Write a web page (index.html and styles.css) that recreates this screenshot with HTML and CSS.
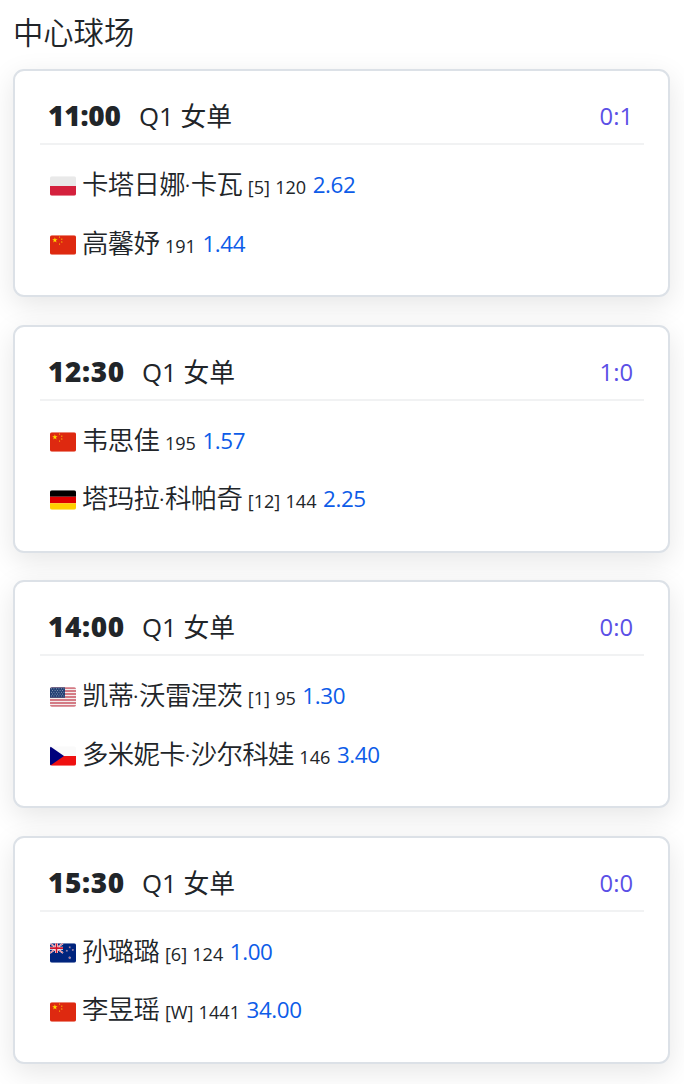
FILE: index.html
```
<!DOCTYPE html>
<html lang="zh-CN">
<head>
<meta charset="utf-8">
<title>中心球场</title>
<link rel="stylesheet" href="styles.css">
</head>
<body>
<svg class="defs" aria-hidden="true">
  <defs>
    <clipPath id="round"><rect width="26" height="19.5" rx="1.8"/></clipPath>
    <path id="star" d="M0-1 .225-.309.951-.309.363.118.588.809 0 .382-.588.809-.363.118-.951-.309-.225-.309z"/>
    <symbol id="pl" viewBox="0 0 26 19.5"><g clip-path="url(#round)"><path fill="#e9e9e9" d="M0 0h26v10H0z"/><path fill="#d4213d" d="M0 9.75h26V19.5H0z"/></g></symbol>
    <symbol id="cn" viewBox="0 0 26 19.5"><g clip-path="url(#round)"><path fill="#de2910" d="M0 0h26v19.5H0z"/><g fill="#ffde00"><use href="#star" transform="translate(4.9 4.9) scale(2.8)"/><use href="#star" transform="translate(9.6 1.9) scale(.95) rotate(20)"/><use href="#star" transform="translate(11.8 3.9) scale(.95) rotate(40)"/><use href="#star" transform="translate(11.8 6.8) scale(.95)"/><use href="#star" transform="translate(9.6 8.9) scale(.95) rotate(20)"/></g></g></symbol>
    <symbol id="de" viewBox="0 0 26 19.5"><g clip-path="url(#round)"><path d="M0 0h26v6.5H0z"/><path fill="#d00" d="M0 6.5h26V13H0z"/><path fill="#ffce00" d="M0 13h26v6.5H0z"/></g></symbol>
    <symbol id="us" viewBox="0 0 26 19.5"><g clip-path="url(#round)"><path fill="#f4eded" d="M0 0h26v19.5H0z"/><path stroke="#c95563" stroke-width="1.5" d="M0 .75h26M0 3.75h26M0 6.75h26M0 9.75h26M0 12.75h26M0 15.75h26M0 18.75h26"/><path fill="#233f73" d="M0 0h15v10.5H0z"/><path stroke="#b9c2d4" stroke-width=".8" stroke-dasharray=".8 1.7" d="M1 1.5h13.5M2.2 3.3h12M1 5.1h13.5M2.2 6.9h12M1 8.7h13.5"/></g></symbol>
    <symbol id="cz" viewBox="0 0 26 19.5"><g clip-path="url(#round)"><path fill="#fafafa" d="M0 0h26v10H0z"/><path fill="#ef1010" d="M0 9.75h26V19.5H0z"/><path fill="#00007c" d="M0 0l14 9.75L0 19.5z"/></g></symbol>
    <symbol id="nz" viewBox="0 0 26 19.5"><g clip-path="url(#round)"><path fill="#00247d" d="M0 0h26v19.5H0z"/><path stroke="#fff" stroke-width="1.7" d="M0 0l13 9.75M13 0L0 9.75"/><path stroke="#cf142b" stroke-width=".7" d="M0 0l13 9.75M13 0L0 9.75"/><path stroke="#fff" stroke-width="3" d="M6.5 0v9.75M0 4.88h13"/><path stroke="#cf142b" stroke-width="1.7" d="M6.5 0v9.75M0 4.88h13"/><g fill="#cc142b" stroke="#fff" stroke-width=".3"><use href="#star" transform="translate(19.7 4.1) scale(.9)"/><use href="#star" transform="translate(16.8 7.5) scale(.9)"/><use href="#star" transform="translate(22.8 6.7) scale(.9)"/><use href="#star" transform="translate(19.7 14.5) scale(1.2)"/></g></g></symbol>
  </defs>
</svg>
<main class="court">
  <h1 class="court-name">中心球场</h1>
  <section class="card">
    <header class="head"><b class="time time-tight">11:00</b><span class="round">Q1 女单</span><span class="score">0:1</span></header>
    <div class="player"><svg class="flag"><use href="#pl"/></svg><span class="name">卡塔日娜<i class="dot">·</i>卡瓦</span><span class="rank">[5] 120</span><span class="odds">2.62</span></div>
    <div class="player"><svg class="flag"><use href="#cn"/></svg><span class="name">高馨妤</span><span class="rank">191</span><span class="odds">1.44</span></div>
  </section>
  <section class="card">
    <header class="head"><b class="time">12:30</b><span class="round">Q1 女单</span><span class="score">1:0</span></header>
    <div class="player"><svg class="flag"><use href="#cn"/></svg><span class="name">韦思佳</span><span class="rank">195</span><span class="odds">1.57</span></div>
    <div class="player"><svg class="flag"><use href="#de"/></svg><span class="name">塔玛拉<i class="dot">·</i>科帕奇</span><span class="rank">[12] 144</span><span class="odds">2.25</span></div>
  </section>
  <section class="card">
    <header class="head"><b class="time">14:00</b><span class="round">Q1 女单</span><span class="score">0:0</span></header>
    <div class="player"><svg class="flag"><use href="#us"/></svg><span class="name">凯蒂<i class="dot">·</i>沃雷涅茨</span><span class="rank">[1] 95</span><span class="odds">1.30</span></div>
    <div class="player"><svg class="flag"><use href="#cz"/></svg><span class="name">多米妮卡<i class="dot">·</i>沙尔科娃</span><span class="rank">146</span><span class="odds">3.40</span></div>
  </section>
  <section class="card">
    <header class="head"><b class="time">15:30</b><span class="round">Q1 女单</span><span class="score">0:0</span></header>
    <div class="player"><svg class="flag"><use href="#nz"/></svg><span class="name">孙璐璐</span><span class="rank">[6] 124</span><span class="odds">1.00</span></div>
    <div class="player"><svg class="flag"><use href="#cn"/></svg><span class="name">李昱瑶</span><span class="rank">[W] 1441</span><span class="odds">34.00</span></div>
  </section>
</main>
</body>
</html>
```
FILE: styles.css
```
* { box-sizing: border-box; }
body {
  margin: 0;
  background: #fff;
  color: #212529;
  font-family: "Open Sans", "Noto Sans CJK SC", sans-serif;
  font-weight: 375;
  overflow: hidden;
}
.defs { position: absolute; width: 0; height: 0; }
.court {
  height: 1084px;
  padding: 0 14px 0 13px;
  display: flex;
  flex-direction: column;
}
.court-name {
  flex: none;
  margin: 0;
  height: 69px;
  padding-top: 9px;
  font-family: "Noto Sans CJK SC", sans-serif;
  font-weight: 350;
  font-size: 30.3px;
  line-height: 44px;
}
.card {
  flex: none;
  height: 228px;
  margin-bottom: 27.6px;
  padding: 20px 24px 0 25px;
  border: 2px solid #dce1e7;
  border-radius: 11px;
  background: #fff;
  box-shadow: 0 8px 28px rgba(0, 0, 0, .1);
}
.head {
  display: flex;
  align-items: baseline;
  height: 54px;
  padding: 0 11px 0 8px;
  border-bottom: 2px solid #f1f2f3;
  line-height: 49px;
}
.time {
  flex: none;
  width: 94px;
  font-family: "Noto Sans", sans-serif;
  font-weight: 900;
  font-size: 28px;
  letter-spacing: .6px;
}
.time-tight {
  width: 91px;
  letter-spacing: -.2px;
}
.round {
  font-size: 25.8px;
}
.score {
  align-self: flex-start;
  margin-left: auto;
  color: #5b50e6;
  font-size: 23.8px;
  line-height: 51px;
}
.player {
  display: flex;
  align-items: baseline;
  height: 58.5px;
  padding-left: 10px;
  line-height: 58px;
}
.head + .player { margin-top: 9px; }
.flag {
  align-self: center;
  width: 26px;
  height: 20px;
  margin: 6px 6px 0 0;
}
.name {
  font-family: "Noto Sans CJK SC", sans-serif;
  font-weight: 350;
  font-size: 26.4px;
  letter-spacing: -.6px;
}
.dot {
  display: inline-block;
  width: 5.5px;
  font-family: "Noto Sans", sans-serif;
  font-style: normal;
  text-indent: -1px;
}
.rank {
  margin-left: 5.5px;
  font-size: 18.1px;
  word-spacing: .5px;
}
.odds {
  align-self: flex-start;
  margin-left: 6.5px;
  color: #0d5ce8;
  font-size: 22.4px;
  letter-spacing: -.4px;
  line-height: 61px;
}
```
